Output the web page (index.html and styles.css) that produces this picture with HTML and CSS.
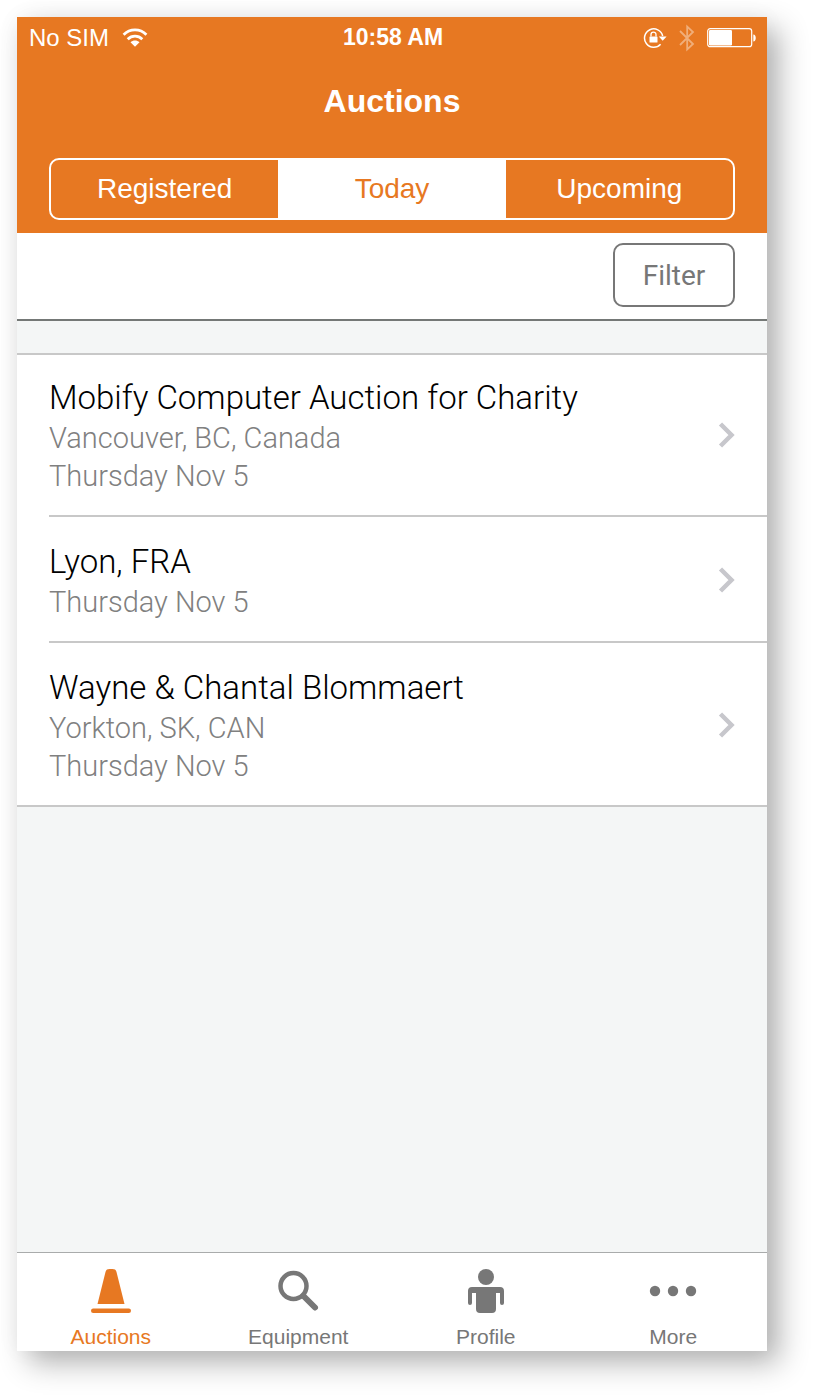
FILE: index.html
```html
<!DOCTYPE html>
<html lang="en">
<head>
<meta charset="utf-8">
<meta name="viewport" content="width=device-width, initial-scale=1">
<title>Auctions</title>
<link rel="stylesheet" href="styles.css">
</head>
<body>
<div class="phone">
  <header class="header">
    <div class="status">
      <div class="status-left">
        <span>No SIM</span>
        <svg class="wifi" width="26" height="20" viewBox="0 0 26 20" fill="none" stroke="#fff" stroke-width="2.800">
          <path d="M1.600 6.700C8 .3 18 .3 24.400 6.700M5.700 11.200C9.800 7.200 16.200 7.200 20.300 11.200"/>
          <path d="M8.500 14.200C11 11.900 15 11.900 17.500 14.200L13 18.800Z" fill="#fff" stroke="none"/>
        </svg>
      </div>
      <time class="clock">10:58 AM</time>
      <div class="status-right">
        <svg width="24" height="22" viewBox="0 0 24 22" fill="none" stroke="#fff">
          <path d="M19.700 9A9.200 9.200 0 1 0 17.600 17.200" stroke-width="1.500"/>
          <path d="M15.800 9.500H23.600L19.700 13.700Z" fill="#fff" stroke="none"/>
          <rect x="6.500" y="9.500" width="8" height="6" rx=".6" fill="#fff" stroke="none"/>
          <path d="M8 9.500V7.600a2.500 2.500 0 0 1 5 0v1.900" stroke-width="1.300"/>
        </svg>
        <svg class="bluetooth" width="16" height="28" viewBox="0 0 16 28" fill="none" stroke="#fff" stroke-width="1.800">
          <path d="M1 7L14 20L8.200 25.500V2.500L14 8L1 21"/>
        </svg>
        <svg width="50" height="20" viewBox="0 0 50 20">
          <rect x=".7" y=".7" width="44" height="18" rx="2.500" fill="none" stroke="#fff" stroke-width="1.200"/>
          <rect x="2" y="2" width="23" height="15.500" rx="1.200" fill="#fff"/>
          <path d="M46.300 6.500c3.300 0 3.300 7 0 7z" fill="#fff"/>
        </svg>
      </div>
    </div>
    <h1 class="title">Auctions</h1>
    <div class="segments">
      <button class="segment" type="button">Registered</button>
      <button class="segment segment-active" type="button" aria-pressed="true">Today</button>
      <button class="segment" type="button">Upcoming</button>
    </div>
  </header>
  <div class="toolbar">
    <button class="filter" type="button">Filter</button>
  </div>
  <main class="content">
    <ul class="list">
      <li><a class="row" href="#mobify">
        <div class="row-text">
          <h2 class="row-title">Mobify Computer Auction for Charity</h2>
          <p>Vancouver, BC, Canada</p>
          <p>Thursday Nov 5</p>
        </div>
        <svg class="chevron" width="17" height="28" viewBox="0 0 17 28"><path d="M2.500 2L13.500 13L2.500 24"/></svg>
      </a></li>
      <li><a class="row" href="#lyon">
        <div class="row-text">
          <h2 class="row-title">Lyon, FRA</h2>
          <p>Thursday Nov 5</p>
        </div>
        <svg class="chevron" width="17" height="28" viewBox="0 0 17 28"><path d="M2.500 2L13.500 13L2.500 24"/></svg>
      </a></li>
      <li><a class="row" href="#wayne">
        <div class="row-text">
          <h2 class="row-title">Wayne &amp; Chantal Blommaert</h2>
          <p>Yorkton, SK, CAN</p>
          <p>Thursday Nov 5</p>
        </div>
        <svg class="chevron" width="17" height="28" viewBox="0 0 17 28"><path d="M2.500 2L13.500 13L2.500 24"/></svg>
      </a></li>
    </ul>
  </main>
  <nav class="tabs">
    <a class="tab tab-active" href="#auctions" aria-current="page">
      <svg width="44" height="48" viewBox="0 0 44 48" fill="currentColor">
        <path d="M16.500 5C17.200 2.600 18.500 2 20.500 2H23.500C25.500 2 26.800 2.600 27.500 5L35.500 37H8.500Z"/>
        <rect x="2" y="41.500" width="40" height="4.500" rx="2.200"/>
      </svg>
      <span>Auctions</span>
    </a>
    <a class="tab" href="#equipment">
      <svg width="44" height="48" viewBox="0 0 44 48" fill="none" stroke="currentColor" stroke-linecap="round">
        <circle cx="17.500" cy="19" r="13" stroke-width="4.500"/>
        <path d="M27.500 29L39 40.500" stroke-width="6"/>
      </svg>
      <span>Equipment</span>
    </a>
    <a class="tab" href="#profile">
      <svg width="44" height="48" viewBox="0 0 44 48" fill="currentColor">
        <circle cx="22" cy="10" r="8"/>
        <path d="M8 20H36Q40 20 40 24V36a2 2 0 0 1-4 0V26H32V42Q32 46 28 46H16Q12 46 12 42V26H8V36a2 2 0 0 1-4 0V24Q4 20 8 20Z"/>
      </svg>
      <span>Profile</span>
    </a>
    <a class="tab" href="#more">
      <svg width="48" height="48" viewBox="0 0 48 48" fill="currentColor">
        <circle cx="6" cy="24" r="5.200"/><circle cx="24" cy="24" r="5.200"/><circle cx="42" cy="24" r="5.200"/>
      </svg>
      <span>More</span>
    </a>
  </nav>
</div>
</body>
</html>
```
FILE: styles.css
```css
* {
  box-sizing: border-box;
}

body {
  display: flex;
  min-height: 100vh;
  margin: 0;
  padding: 17px 48px 48px 17px;
  background: #fff;
  font-family: "Liberation Sans", Arial, sans-serif;
}

button {
  font-family: inherit;
  cursor: pointer;
}

svg {
  display: block;
  flex: none;
}

.phone {
  flex: 1;
  display: flex;
  flex-direction: column;
  min-width: 0;
  background: #f4f6f6;
  box-shadow: 12px 12px 28px rgba(0, 0, 0, 0.3), 0 0 24px rgba(0, 0, 0, 0.04);
}

.header {
  padding-bottom: 13px;
  background: #e77822;
  color: #fff;
}

.status {
  display: grid;
  grid-template-columns: 1fr auto 1fr;
  align-items: center;
  height: 41px;
  padding: 0 10px 0 12px;
  font-size: 24px;
}

.status-left,
.status-right {
  display: flex;
  align-items: center;
  gap: 13px;
}

.status-right {
  justify-content: flex-end;
  gap: 12px;
}

.clock {
  font-size: 23px;
  font-weight: bold;
}

.bluetooth {
  opacity: 0.4;
}

.title {
  margin: 0;
  font-size: 32px;
  line-height: 87px;
  text-align: center;
}

.segments {
  display: grid;
  grid-template-columns: repeat(3, 1fr);
  height: 62px;
  margin: 13px 32px 0;
  overflow: hidden;
  border: 2px solid #fff;
  border-radius: 10px;
}

.segment {
  padding: 0;
  border: 0;
  background: transparent;
  color: #fff;
  font-size: 28px;
}

.segment-active {
  background: #fff;
  color: #e77822;
}

.toolbar {
  display: flex;
  justify-content: flex-end;
  padding: 10px 32px 12px;
  border-bottom: 2px solid #747876;
  background: #fff;
}

.filter {
  width: 122px;
  height: 64px;
  border: 2px solid #777;
  border-radius: 10px;
  background: #fff;
  color: #777;
  font-family: Roboto, sans-serif;
  font-size: 28px;
}

.content {
  flex: 1;
  padding-top: 32px;
  font-family: Roboto, sans-serif;
}

.list {
  margin: 0;
  padding: 0 0 0 32px;
  border-top: 2px solid #c8c8c8;
  border-bottom: 2px solid #c8c8c8;
  background: #fff;
  list-style: none;
}

.list li + li {
  border-top: 2px solid #c8c8c8;
}

.row {
  display: flex;
  align-items: center;
  justify-content: space-between;
  padding: 24px 32px 20px 0;
  color: #808080;
  font-size: 29px;
  font-weight: 300;
  line-height: 38px;
  text-decoration: none;
}

.list li:first-child .row {
  padding-top: 22px;
}

.row-title {
  margin: 0;
  color: #000;
  font-size: 33px;
  font-weight: 300;
  line-height: 42px;
}

.row p {
  margin: 0;
}

.chevron {
  fill: none;
  stroke: #c7c7cc;
  stroke-width: 4.500px;
}

.tabs {
  display: grid;
  grid-template-columns: repeat(4, 1fr);
  border-top: 1px solid #a9abab;
  background: #fff;
}

.tab {
  display: flex;
  flex-direction: column;
  align-items: center;
  gap: 10px;
  padding: 14px 0 2px;
  color: #777;
  font-size: 21px;
  line-height: 24px;
  text-decoration: none;
}

.tab-active {
  color: #e77822;
}
```
